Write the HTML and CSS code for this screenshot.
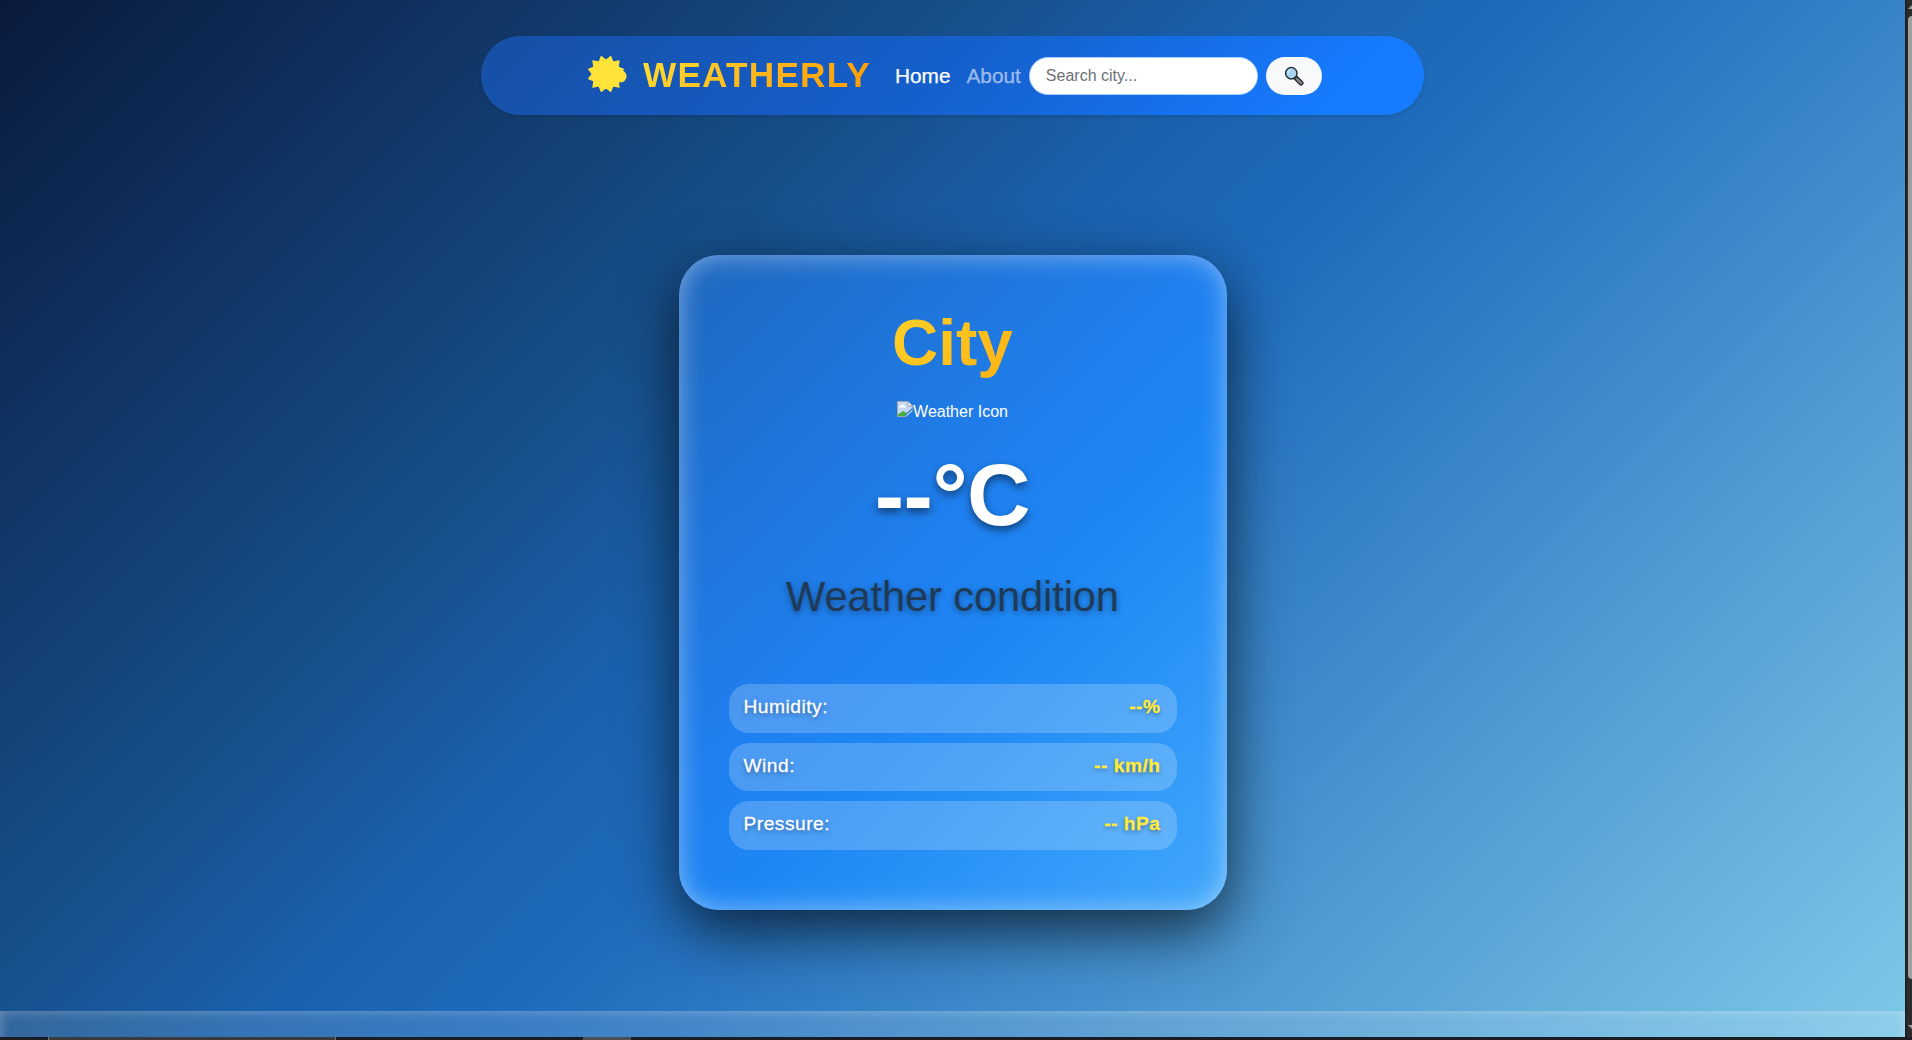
FILE: index.html
```html
<!DOCTYPE html>
<html lang="en">
<head>
<meta charset="utf-8">
<title>Weatherly</title>
<link rel="stylesheet" href="styles.css">
</head>
<body>
<div class="desktop">
  <div class="page">
    <nav class="navbar">
      <div class="brand">
        <svg class="brand-icon" viewBox="0 0 40 38">
          <g fill="#ffe338" stroke="#ffe338" stroke-width="1.2" stroke-linejoin="round">
            <path d="M19 4.200 23.800.6 25.900 6 32.100 4.900 31 11.100 36.400 13.200 32.800 18 36.400 22.800 31 24.900 32.100 31.100 25.900 30 23.800 35.400 19 31.800 14.200 35.400 12.100 30 5.900 31.100 7 24.900 1.600 22.800 5.200 18 1.600 13.200 7 11.100 5.900 4.900 12.100 6 14.200.6Z"/>
            <path d="M31 12.500 36.500 15.500Q39.500 18.500 38.800 21.500 37.300 26 32.500 26L28 25Z"/>
          </g>
        </svg>
        <span class="brand-name">WEATHERLY</span>
      </div>
      <a class="nav-link active">Home</a>
      <a class="nav-link">About</a>
      <form class="search">
        <input class="search-input" type="text" placeholder="Search city...">
        <button class="search-button" type="button" aria-label="Search">
          <svg width="20" height="20" viewBox="0 0 20 20">
            <path d="M12 12 17 17" stroke="#222" stroke-width="5" stroke-linecap="round"/>
            <path d="M12.8 12.8 17 17" stroke="#7d858a" stroke-width="2.6" stroke-linecap="round"/>
            <circle cx="7.3" cy="7.3" r="5.7" fill="#a8d3f0" stroke="#27343c" stroke-width="1.5"/>
            <path d="M4 7.5A3.5 3.5 0 0 1 7.5 4" fill="none" stroke="#d7edfa" stroke-width="1.2"/>
          </svg>
        </button>
      </form>
    </nav>

    <main class="card">
      <h1 class="city">City</h1>
      <div class="weather-image">
        <svg width="16" height="16" viewBox="0 0 16 16">
          <path d="M.5.5H11L15.500 5V15.500H.5Z" fill="#c5d8f5" stroke="#a3a7ad"/>
          <path d="M1 15V13.500L6 10 10 12 9 15Z" fill="#4caf2f"/>
          <path d="M2.500 6.500a1.500 1.500 0 0 1 1.500-2 2 2 0 0 1 3.500 0 1.300 1.300 0 0 1 1 2Z" fill="#fff"/>
          <path d="M11 .5V5H15.500Z" fill="#fff" stroke="#8e959e" stroke-width=".8"/>
          <path d="M9 16 16 9.500V16Z" fill="#2079e8"/>
          <path d="M8 14.500 15.500 7.500" stroke="#3c83df" stroke-width="1.500"/>
        </svg><span>Weather Icon</span>
      </div>
      <div class="temperature">--°C</div>
      <p class="condition">Weather condition</p>
      <ul class="details">
        <li class="detail"><span>Humidity:</span><strong>--%</strong></li>
        <li class="detail"><span>Wind:</span><strong>-- km/h</strong></li>
        <li class="detail"><span>Pressure:</span><strong>-- hPa</strong></li>
      </ul>
    </main>

    <footer class="footer"></footer>
  </div>
  <aside class="scrollbar">
    <svg class="scroll-arrow" width="4" height="5" viewBox="0 0 4 5"><path d="M0 4 4 0V4Z"/></svg>
    <div class="scroll-thumb"></div>
    <svg class="scroll-arrow bottom" width="4" height="5" viewBox="0 0 4 5"><path d="M0 0H4V4Z"/></svg>
  </aside>
  <div class="taskbar"><div class="task-search"></div><div class="task-active"></div></div>
</div>
</body>
</html>
```
FILE: styles.css
```css
* { box-sizing: border-box; }

body {
  margin: 0;
  overflow: hidden;
  font-family: "Liberation Sans", Arial, sans-serif;
  color: #fff;
}

.desktop {
  display: grid;
  grid-template: 1037px 3px / 1905px 7px;
  width: 1912px;
  height: 1040px;
  background: #202124;
}

.page {
  display: flex;
  flex-direction: column;
  align-items: center;
  padding-top: 36px;
  overflow: hidden;
  background: linear-gradient(135deg, #0a1a3c 0%, #174f8b 33%, #1a62ae 44%, #1e6bbc 52%, #7ec8e8 100%);
}

.navbar {
  display: flex;
  align-items: center;
  flex: none;
  width: 943px;
  height: 79px;
  padding-left: 106px;
  border-radius: 40px;
  background: linear-gradient(135deg, #164fa5, #1560cd 50%, #167bff 90%);
  box-shadow: 0 2px 4px rgba(0, 0, 0, .12);
}

.brand { display: flex; align-items: center; gap: 16px; width: 308px; }
.brand-icon { width: 40px; height: 38px; flex: none; }
.brand-name {
  font-size: 35.2px;
  font-weight: 700;
  line-height: 1.2;
  letter-spacing: 1.2px;
  background: linear-gradient(135deg, #ffdf32, #ffb71b 50%, #ff9800);
  background-clip: text;
  color: transparent;
}

.nav-link {
  margin-right: 16px;
  padding-top: 1px;
  font-size: 20.8px;
  color: rgba(255, 255, 255, .55);
  -webkit-text-stroke: .25px currentColor;
}
.nav-link.active { color: #fff; }

.search { display: flex; gap: 8px; margin-left: -8px; }
.search-input {
  width: 229px;
  height: 38px;
  padding: 0 16px;
  border: 1px solid #a9d1ff;
  border-radius: 20px;
  background: #fff;
  font: 16px "Liberation Sans", Arial, sans-serif;
}
.search-input::placeholder { color: #6c7075; }
.search-button {
  display: grid;
  place-items: center;
  width: 56px;
  height: 38px;
  padding: 0;
  border: 0;
  border-radius: 20px;
  background: #f8f9fa;
}

.card {
  display: flex;
  flex-direction: column;
  align-items: center;
  flex: none;
  width: 548px;
  height: 655px;
  margin-top: 140px;
  padding: 53px 50px 0;
  border-radius: 40px;
  background: linear-gradient(135deg, #1f6ac4 5%, #1f80f0 45%, #1e88f5 60%, #42a8fb 100%);
  box-shadow: 0 20px 60px rgba(0, 0, 0, .7), inset 0 0 26px rgba(255, 255, 255, .45);
}

.city {
  margin: 0;
  width: 100%;
  text-align: center;
  font-size: 64px;
  line-height: 70px;
  letter-spacing: 0;
  background: linear-gradient(135deg, #ffeb3b, #ff9800);
  background-clip: text;
  color: transparent;
}

.weather-image { display: flex; margin-top: 23px; height: 20px; font-size: 16px; line-height: 22px; }

.temperature {
  margin-top: 24px;
  font-size: 88px;
  font-weight: 700;
  line-height: 100px;
  letter-spacing: -.5px;
  text-shadow: 0 4px 8px rgba(0, 0, 0, .5);
}

.condition {
  margin: 27px 0 0;
  font-size: 41.6px;
  line-height: 50px;
  letter-spacing: -.1px;
  color: #1f3a57;
  text-shadow: 0 2px 6px rgba(0, 0, 0, .4);
}

.details {
  display: grid;
  gap: 10px;
  width: 448px;
  margin: 62px 0 0;
  padding: 0;
  list-style: none;
}

.detail {
  display: flex;
  justify-content: space-between;
  align-items: center;
  height: 48.6px;
  padding: 0 16px 2px 15px;
  border-radius: 20px;
  background: rgba(255, 255, 255, .2);
  font-size: 19.2px;
  letter-spacing: .5px;
  -webkit-text-stroke: .3px currentColor;
  text-shadow: 0 2px 4px rgba(0, 0, 0, .4);
}
.detail strong { color: #ffeb3b; }

.footer {
  width: 100%;
  height: 80px;
  flex: none;
  margin-top: 101px;
  background: rgba(255, 255, 255, .12);
  box-shadow: inset 0 0 12px rgba(255, 255, 255, .3);
}

.scrollbar {
  display: flex;
  flex-direction: column;
  align-items: flex-end;
  padding-top: 5px;
  background: #2b2b2b;
  border-left: 2px solid #202020;
}
.scroll-arrow { fill: #9f9f9f; display: block; }
.scroll-thumb { width: 4px; height: 963px; margin-top: 6px; background: #9f9f9f; border-radius: 4px 0 0 4px; }
.scroll-arrow.bottom { margin-top: 46px; }

.taskbar { grid-column: 1 / -1; display: flex; background: #1c1d22; padding-left: 48px; }
.task-search { width: 288px; background: #3b3b3d; border: solid #77797c; border-width: 0 1px; }
.task-active { width: 48px; margin-left: 247px; background: #4d4f55; }
```
